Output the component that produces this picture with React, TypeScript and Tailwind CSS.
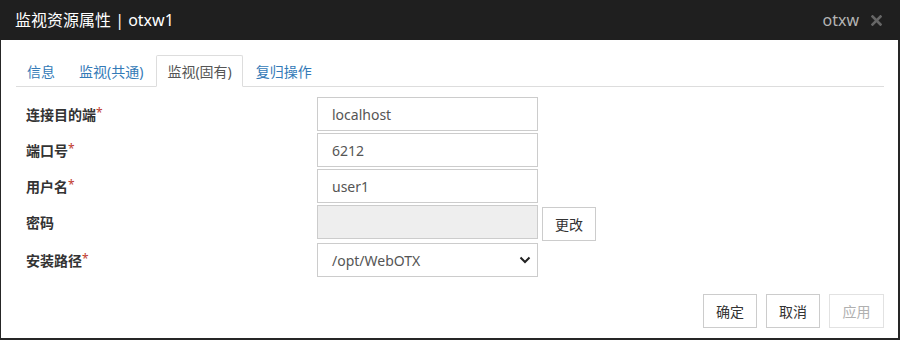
import React from 'react';

const FONT = '"Noto Sans", "Noto Sans CJK SC", sans-serif';

const tabs = [
  { label: '信息', active: false },
  { label: '监视(共通)', active: false },
  { label: '监视(固有)', active: true },
  { label: '复归操作', active: false },
];

function Label({ text, required }: { text: string; required?: boolean }) {
  return (
    <div className="pl-[10px] text-[14px] font-bold text-[#333]">
      {text}
      {required && <span className="text-[#c0392b] font-normal text-[12px] relative -top-[3px]">*</span>}
    </div>
  );
}

function TextBox({ value, disabled }: { value?: string; disabled?: boolean }) {
  return (
    <div
      className={
        'w-[221px] h-[34px] border border-[#ccc] px-[14px] flex items-center text-[14px] text-[#555] ' +
        (disabled ? 'bg-[#eee]' : 'bg-white')
      }
    >
      {value}
    </div>
  );
}

export default function App() {
  return (
    <div className="w-[900px] h-[340px] flex flex-col bg-white" style={{ fontFamily: FONT }}>
      {/* title bar */}
      <div className="h-[40px] bg-[#1f1f1f] flex items-center pl-[15px] pr-[18px]">
        <span className="text-white text-[16px]">监视资源属性 | otxw1</span>
        <span className="ml-auto text-[#b4b4b4] text-[16px]">otxw</span>
        <svg className="ml-[12px]" width="11" height="11" viewBox="0 0 11 11">
          <path d="M1.5 1.5 L9.5 9.5 M9.5 1.5 L1.5 9.5" stroke="#666" strokeWidth="2.6" strokeLinecap="square" />
        </svg>
      </div>

      <div className="flex-1 flex flex-col border-l border-r-2 border-b-2 border-[#262626] pl-[15px] pr-[14px]">
        {/* tabs */}
        <div className="mt-[15px] flex border-b border-[#ddd] h-[32px]">
          {tabs.map((t) => (
            <div
              key={t.label}
              className={
                'px-[10px] mr-[2px] h-[32px] flex items-center text-[14px] ' +
                (t.active
                  ? 'border border-[#ddd] border-b-white bg-white text-[#555] rounded-t-[2px]'
                  : 'border border-transparent text-[#337ab7]')
              }
            >
              {t.label}
            </div>
          ))}
        </div>

        {/* form */}
        <div className="mt-[10px] flex flex-col">
          <div className="flex items-center">
            <div className="w-[301px]"><Label text="连接目的端" required /></div>
            <TextBox value="localhost" />
          </div>
          <div className="flex items-center mt-[2px]">
            <div className="w-[301px]"><Label text="端口号" required /></div>
            <TextBox value="6212" />
          </div>
          <div className="flex items-center mt-[2px]">
            <div className="w-[301px]"><Label text="用户名" required /></div>
            <TextBox value="user1" />
          </div>
          <div className="flex items-start mt-[2px] h-[36px]">
            <div className="w-[301px] h-[34px] flex items-center"><Label text="密码" /></div>
            <TextBox disabled />
            <button className="ml-[4px] mt-[2px] w-[54px] h-[34px] border border-[#ccc] bg-white text-[14px] text-[#333]">
              更改
            </button>
          </div>
          <div className="flex items-center mt-[2px]">
            <div className="w-[301px]"><Label text="安装路径" required /></div>
            <div className="w-[221px] h-[34px] border border-[#ccc] pl-[14px] pr-[6px] flex items-center text-[14px] text-[#555]">
              /opt/WebOTX
              <svg className="ml-auto" width="12" height="8" viewBox="0 0 12 8">
                <path d="M1.5 1.5 L6 6 L10.5 1.5" fill="none" stroke="#222" strokeWidth="2" />
              </svg>
            </div>
          </div>
        </div>

        {/* footer buttons */}
        <div className="mt-[17px] flex justify-end gap-[9px]">
          <button className="w-[54px] h-[34px] border border-[#ccc] bg-white text-[14px] text-[#333]">确定</button>
          <button className="w-[54px] h-[34px] border border-[#ccc] bg-white text-[14px] text-[#333]">取消</button>
          <button className="w-[55px] h-[34px] border border-[#e2e2e2] bg-white text-[14px] text-[#b0b0b0]">应用</button>
        </div>
      </div>
    </div>
  );
}
